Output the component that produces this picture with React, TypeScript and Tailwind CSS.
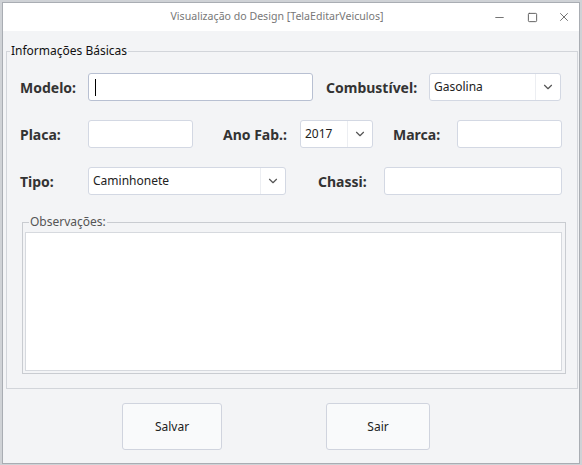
import { ChevronDown, Minus, Square, X } from "lucide-react"

const font = { fontFamily: '"Noto Sans", "Open Sans", sans-serif' }

function Field({ className = "", focused = false }: { className?: string; focused?: boolean }) {
  return (
    <div
      className={`h-[28px] rounded-[3px] border bg-white flex items-center px-[6px] ${
        focused ? "border-[#b8c0d2]" : "border-[#d3d8e3]"
      } ${className}`}
    >
      {focused && <span className="w-px h-[17px] bg-black" />}
    </div>
  )
}

function Select({ value, className = "" }: { value: string; className?: string }) {
  return (
    <div className={`h-[28px] rounded-[3px] border border-[#d3d8e3] bg-white flex ${className}`}>
      <span className="flex-1 flex items-center pl-[4px] text-[12px] text-[#222]">{value}</span>
      <span className="w-[25px] border-l border-[#eceef2] flex items-center justify-center">
        <ChevronDown className="w-[14px] h-[14px] text-[#555]" strokeWidth={2} />
      </span>
    </div>
  )
}

function Label({ text, className = "" }: { text: string; className?: string }) {
  return <span className={`text-[14px] font-bold text-[#333] shrink-0 ${className}`}>{text}</span>
}

export default function App() {
  return (
    <div className="w-[582px] h-[465px] bg-[#cfd2d6] pl-[2px] pt-[2px]" style={font}>
      <div className="w-[578px] h-[462px] border border-[#a9adb3] bg-[#f3f4f6] flex flex-col">
        {/* Title bar */}
        <div className="h-[28px] bg-white flex items-center relative shrink-0">
          <span className="flex-1 text-center text-[10.6px] text-[#777] pr-[28px]">
            Visualização do Design [TelaEditarVeiculos]
          </span>
          <div className="absolute right-0 top-0 h-full flex items-center text-[#555]">
            <span className="w-[33px] flex justify-center">
              <Minus className="w-[13px] h-[13px]" strokeWidth={1.5} />
            </span>
            <span className="w-[33px] flex justify-center">
              <Square className="w-[11px] h-[11px]" strokeWidth={2} />
            </span>
            <span className="w-[30px] flex justify-center">
              <X className="w-[14px] h-[14px]" strokeWidth={1.4} />
            </span>
          </div>
        </div>

        {/* Body */}
        <div className="pt-[12px] px-[3px]">
          <fieldset className="border border-[#d2d5da] w-[572px] pb-[14px]">
            <legend className="ml-[3px] px-[1px] text-[12px] leading-[16px] text-[#111]">
              Informações Básicas
            </legend>

            <div className="mt-[14px] pl-[13px] flex flex-col gap-[19px]">
              <div className="flex items-center">
                <Label text="Modelo:" className="w-[68px]" />
                <Field className="w-[225px]" focused />
                <Label text="Combustível:" className="ml-[13px] w-[103px]" />
                <Select value="Gasolina" className="w-[132px]" />
              </div>

              <div className="flex items-center">
                <Label text="Placa:" className="w-[68px]" />
                <Field className="w-[105px]" />
                <Label text="Ano Fab.:" className="ml-[30px] w-[77px]" />
                <Select value="2017" className="w-[73px]" />
                <Label text="Marca:" className="ml-[20px] w-[64px]" />
                <Field className="w-[105px]" />
              </div>

              <div className="flex items-center">
                <Label text="Tipo:" className="w-[68px]" />
                <Select value="Caminhonete" className="w-[198px]" />
                <Label text="Chassi:" className="ml-[32px] w-[66px]" />
                <Field className="w-[178px]" />
              </div>
            </div>

            <fieldset className="mt-[19px] ml-[15px] w-[544px] border border-[#c9ccd1] pl-[2px] pr-[3px] pb-[2px]">
              <legend className="ml-[4px] px-[1px] text-[12px] leading-[16px] text-[#555]">
                Observações:
              </legend>
              <div className="mt-[2px] h-[139px] bg-white border border-[#d6d9de]" />
            </fieldset>
          </fieldset>

          <div className="flex mt-[14px]">
            <button className="ml-[116px] w-[100px] h-[47px] rounded-[3px] border border-[#d0d4de] bg-[#f9fafb] text-[12px] text-[#222]">
              Salvar
            </button>
            <button className="ml-[104px] w-[104px] h-[47px] rounded-[3px] border border-[#d0d4de] bg-[#f9fafb] text-[12px] text-[#222]">
              Sair
            </button>
          </div>
        </div>
      </div>
    </div>
  )
}
